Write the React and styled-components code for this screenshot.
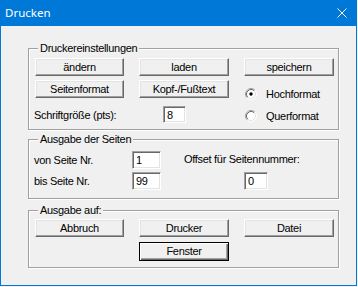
import React from 'react';
import styled, { createGlobalStyle } from 'styled-components';

const Global = createGlobalStyle`
  html, body { margin: 0; padding: 0; background: #f0f0f0; }
  body {
    font-family: "Liberation Sans", Arial, sans-serif;
    font-size: 11px;
    letter-spacing: -0.3px;
    color: #000;
  }
`;

const Window = styled.div`
  width: 357px;
  height: 286px;
  box-sizing: border-box;
  border: 1px solid #0078d7;
  border-top: 0;
  display: flex;
  flex-direction: column;
  background: #f0f0f0;
`;

const TitleBar = styled.div`
  height: 26px;
  flex: none;
  background: #0078d7;
  color: #fff;
  display: flex;
  align-items: center;
  justify-content: space-between;
  padding: 0 9px 0 4px;
  font-family: "Noto Sans", "Liberation Sans", sans-serif;
  font-size: 11.5px;
  letter-spacing: 0;
`;

const Title = styled.span`
  line-height: 14px;
`;

const Content = styled.div`
  flex: 1;
  display: flex;
  flex-direction: column;
  padding: 22px 17px 17px 27px;
`;

const Group = styled.div`
  position: relative;
  border: 1px solid #a0a0a0;
  box-shadow: 1px 1px 0 #fff, inset 1px 1px 0 #fff;
  margin-top: ${p => p.$gap || 0}px;
  padding: ${p => p.$pad};
`;

const Caption = styled.span`
  position: absolute;
  top: -7px;
  left: 9px;
  padding: 0 2px;
  line-height: 13px;
  background: #f0f0f0;
`;

const Grid = styled.div`
  display: grid;
  grid-template-columns: ${p => p.$cols};
  grid-template-rows: ${p => p.$rows};
  column-gap: ${p => p.$colGap}px;
  row-gap: ${p => p.$rowGap}px;
`;

const Button = styled.button`
  font: inherit;
  letter-spacing: inherit;
  color: #000;
  margin: 0;
  padding: 0 0 1px;
  background: #f0f0f0;
  box-sizing: border-box;
  height: ${p => (p.$default ? 19 : 18)}px;
  border: 1px solid;
  border-color: ${p => (p.$default ? '#000' : '#fff #696969 #696969 #fff')};
  box-shadow: ${p =>
    p.$default
      ? 'inset 1px 1px 0 #fff, inset -1px -1px 0 #696969, inset -2px -2px 0 #a0a0a0'
      : 'inset -1px -1px 0 #a0a0a0, inset 1px 1px 0 #e3e3e3'};
  grid-column: ${p => p.$col || 'auto'};
  grid-row: ${p => p.$row || 'auto'};
  cursor: default;
`;

const Label = styled.span`
  display: flex;
  align-items: center;
  white-space: nowrap;
  grid-column: ${p => p.$col || 'auto'};
  grid-row: ${p => p.$row || 'auto'};
  margin-left: ${p => p.$indent || 0}px;
  padding-bottom: ${p => p.$lift || 0}px;
  align-self: ${p => p.$align || 'stretch'};
  height: ${p => (p.$h ? `${p.$h}px` : 'auto')};
`;

const Field = styled.input`
  font: inherit;
  letter-spacing: inherit;
  color: #000;
  box-sizing: border-box;
  width: ${p => p.$w}px;
  height: ${p => p.$h}px;
  margin: 0 0 0 ${p => p.$indent || 0}px;
  padding: 0 0 0 3px;
  background: #fff;
  border: 1px solid;
  border-color: #a0a0a0 #fff #fff #a0a0a0;
  box-shadow: inset 1px 1px 0 #696969, inset -1px -1px 0 #e3e3e3;
  outline: none;
  grid-column: ${p => p.$col || 'auto'};
  grid-row: ${p => p.$row || 'auto'};
  align-self: ${p => p.$align || 'stretch'};
`;

const RadioColumn = styled.div`
  grid-column: 3;
  grid-row: 2 / 4;
  display: flex;
  flex-direction: column;
  gap: 10px;
  padding: 8px 0 0 1px;
`;

const RadioRow = styled.div`
  display: flex;
  align-items: center;
  height: 12px;
  gap: 9px;
  white-space: nowrap;
`;

const RadioMark = ({ checked }) => (
  <svg width="12" height="12" viewBox="0 0 12 12" style={{ flex: 'none' }}>
    <circle cx="6" cy="6" r="5" fill="#fff" />
    <path d="M2.11 9.89 A5.5 5.5 0 0 1 9.89 2.11" fill="none" stroke="#a0a0a0" strokeWidth="1" />
    <path d="M9.89 2.11 A5.5 5.5 0 0 1 2.11 9.89" fill="none" stroke="#fff" strokeWidth="1" />
    <path d="M2.82 9.18 A4.5 4.5 0 0 1 9.18 2.82" fill="none" stroke="#696969" strokeWidth="1" />
    <path d="M9.18 2.82 A4.5 4.5 0 0 1 2.82 9.18" fill="none" stroke="#e3e3e3" strokeWidth="1" />
    {checked && <circle cx="6" cy="6" r="1.7" fill="#000" />}
  </svg>
);

const Radio = ({ checked, children }) => (
  <RadioRow>
    <RadioMark checked={checked} />
    <span>{children}</span>
  </RadioRow>
);

const CloseIcon = () => (
  <svg width="10" height="10" viewBox="0 0 10 10">
    <path d="M0.5 0.5 L9.5 9.5 M9.5 0.5 L0.5 9.5" stroke="#fff" strokeWidth="1" fill="none" />
  </svg>
);

export default function App() {
  return (
    <>
      <Global />
      <Window>
        <TitleBar>
          <Title>Drucken</Title>
          <CloseIcon />
        </TitleBar>
        <Content>
          <Group $pad="9px 0 6px 6px">
            <Caption>Druckereinstellungen</Caption>
            <Grid $cols="89px 90px 90px" $rows="18px 18px 21px" $colGap={15} $rowGap={4}>
              <Button>ändern</Button>
              <Button>laden</Button>
              <Button>speichern</Button>
              <Button $col={1} $row={2}>Seitenformat</Button>
              <Button $col={2} $row={2}>Kopf-/Fußtext</Button>
              <RadioColumn>
                <Radio checked>Hochformat</Radio>
                <Radio>Querformat</Radio>
              </RadioColumn>
              <Label $col={1} $row={3} $indent={-1} $align="end" $h={17}>Schriftgröße (pts):</Label>
              <Field $col={2} $row={3} $w={23} $h={17} $indent={24} $align="end" defaultValue="8" readOnly />
            </Grid>
          </Group>

          <Group $gap={9} $pad="11px 0 8px 5px">
            <Caption>Ausgabe der Seiten</Caption>
            <Grid $cols="98px 29px 1fr" $rows="18px 18px" $colGap={0} $rowGap={3}>
              <Label $col={1} $row={1}>von Seite Nr.</Label>
              <Field $col={2} $row={1} $w={29} $h={18} defaultValue="1" readOnly />
              <Label $col={3} $row={1} $indent={23} $lift={3}>Offset für Seitennummer:</Label>
              <Label $col={1} $row={2}>bis Seite Nr.</Label>
              <Field $col={2} $row={2} $w={29} $h={18} defaultValue="99" readOnly />
              <Field $col={3} $row={2} $w={24} $h={18} $indent={83} defaultValue="0" readOnly />
            </Grid>
          </Group>

          <Group $gap={11} $pad="8px 0 6px 6px">
            <Caption>Ausgabe auf:</Caption>
            <Grid $cols="89px 90px 90px" $rows="18px 19px" $colGap={15} $rowGap={5}>
              <Button>Abbruch</Button>
              <Button>Drucker</Button>
              <Button>Datei</Button>
              <Button $col={2} $row={2} $default>Fenster</Button>
            </Grid>
          </Group>
        </Content>
      </Window>
    </>
  );
}
